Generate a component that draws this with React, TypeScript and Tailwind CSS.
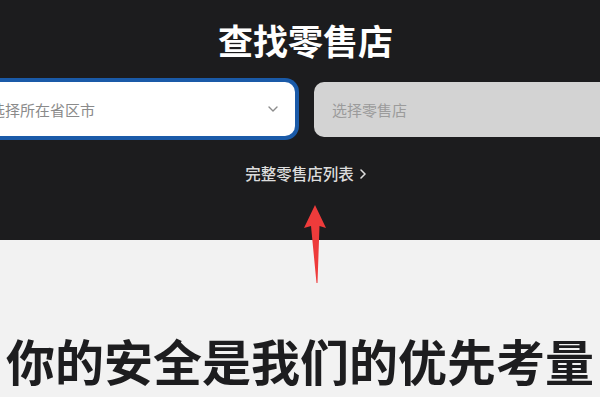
import React from "react";

export default function App() {
  return (
    <div
      className="relative w-[600px] h-[397px] overflow-hidden bg-[#f2f2f2]"
      style={{ fontFamily: '"Noto Sans CJK SC", "Noto Sans", sans-serif' }}
    >
      {/* Dark store finder band */}
      <div className="h-[240px] bg-[#1c1c1e] flex flex-col items-center pt-[22px] pl-[11px]">
        <h1 className="text-[35px] leading-none font-bold text-white">查找零售店</h1>

        <div className="mt-[25px] self-start ml-[-39px] w-[665px] flex gap-[19px]">
          <div className="w-[323px] h-[54px] shrink-0 bg-white rounded-[10px] shadow-[0_0_0_4px_#1a5aa8] flex items-center pl-[18px] pr-[17px]">
            <span className="flex-1 text-[15px] leading-none text-[#8a8a8a]">选择所在省区市</span>
            <svg width="10" height="6" viewBox="0 0 10 6" fill="none">
              <path d="M1 1l4 4 4-4" stroke="#8c8c8c" strokeWidth="1.4" strokeLinecap="round" strokeLinejoin="round" />
            </svg>
          </div>
          <div className="w-[323px] h-[55px] shrink-0 bg-[#d3d3d3] rounded-[10px] flex items-center pl-[18px]">
            <span className="text-[15px] leading-none text-[#9b9b9b]">选择零售店</span>
          </div>
        </div>

        <a className="mt-[29px] flex items-center gap-[6px] text-[15.5px] leading-none font-medium text-[#dcdcdc]">
          完整零售店列表
          <svg width="6" height="10" viewBox="0 0 6 10" fill="none">
            <path d="M1 1l4 4-4 4" stroke="#dcdcdc" strokeWidth="1.6" strokeLinecap="round" strokeLinejoin="round" />
          </svg>
        </a>
      </div>

      {/* Light section */}
      <div className="flex justify-center pt-[95px]">
        <h2 className="text-[49px] leading-none font-bold text-[#1d1d1f] whitespace-nowrap">你的安全是我们的优先考量</h2>
      </div>

      {/* Red annotation arrow */}
      <svg className="absolute left-[302px] top-[204px]" width="26" height="80" viewBox="0 0 26 80">
        <polygon points="13,1 24,24 17.5,22 15.5,79 14.5,79 9,22 2,24" fill="#ee3b3b" />
      </svg>
    </div>
  );
}
